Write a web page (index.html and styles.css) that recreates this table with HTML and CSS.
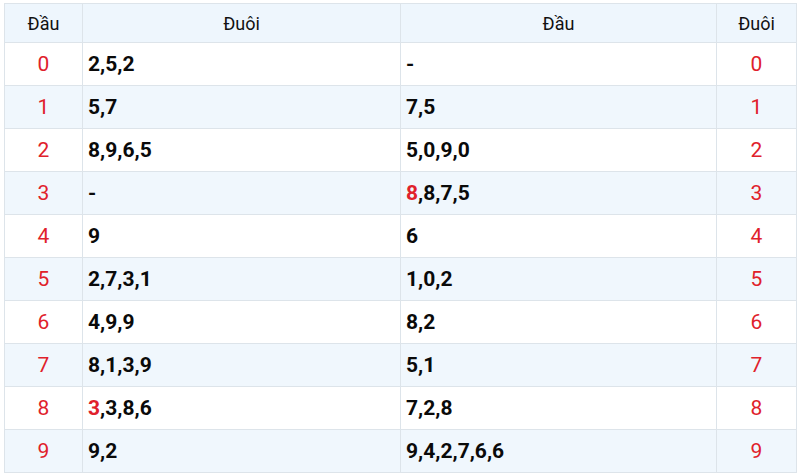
FILE: index.html
```html
<!DOCTYPE html>
<html lang="vi">
<head>
<meta charset="utf-8">
<link rel="stylesheet" href="styles.css">
</head>
<body>
<div class="wrap">
<table class="lt">
  <colgroup>
    <col class="c-num"><col class="c-val"><col class="c-val2"><col class="c-num2">
  </colgroup>
  <thead>
    <tr><th>Đầu</th><th>Đuôi</th><th>Đầu</th><th>Đuôi</th></tr>
  </thead>
  <tbody>
    <tr><td class="n">0</td><td class="v">2,5,2</td><td class="v">-</td><td class="n">0</td></tr>
    <tr><td class="n">1</td><td class="v">5,7</td><td class="v">7,5</td><td class="n">1</td></tr>
    <tr><td class="n">2</td><td class="v">8,9,6,5</td><td class="v">5,0,9,0</td><td class="n">2</td></tr>
    <tr><td class="n">3</td><td class="v">-</td><td class="v"><span class="hl">8</span>,8,7,5</td><td class="n">3</td></tr>
    <tr><td class="n">4</td><td class="v">9</td><td class="v">6</td><td class="n">4</td></tr>
    <tr><td class="n">5</td><td class="v">2,7,3,1</td><td class="v">1,0,2</td><td class="n">5</td></tr>
    <tr><td class="n">6</td><td class="v">4,9,9</td><td class="v">8,2</td><td class="n">6</td></tr>
    <tr><td class="n">7</td><td class="v">8,1,3,9</td><td class="v">5,1</td><td class="n">7</td></tr>
    <tr><td class="n">8</td><td class="v"><span class="hl">3</span>,3,8,6</td><td class="v">7,2,8</td><td class="n">8</td></tr>
    <tr><td class="n">9</td><td class="v">9,2</td><td class="v">9,4,2,7,6,6</td><td class="n">9</td></tr>
  </tbody>
</table>
</div>
</body>
</html>
```
FILE: styles.css
```css
html, body {
  margin: 0;
  padding: 0;
  background: #ffffff;
}
body {
  font-family: Roboto, "Liberation Sans", Arial, sans-serif;
  color: #111;
}
.wrap {
  padding: 3px 4px 0 4px;
}
.lt {
  width: 792px;
  border-collapse: collapse;
  table-layout: fixed;
  border: 1px solid #dde4ea;
}
.c-num { width: 78px; }
.c-val { width: 318px; }
.c-val2 { width: 316px; }
.c-num2 { width: 80px; }
.lt th {
  height: 38px;
  padding: 0;
  font-weight: 400;
  font-size: 18px;
  color: #111;
  background: #eef6fd;
  border: 1px solid #dde4ea;
  text-align: center;
}
.lt td {
  height: 42px;
  padding: 0 5px;
  border: 1px solid #dde4ea;
  font-size: 21px;
}
.lt tbody tr:nth-child(even) td {
  background: #f0f7fd;
}
.lt td.n {
  text-align: center;
  color: #e0212b;
}
.lt td.v {
  font-weight: 700;
  color: #0a0a0a;
}
.hl {
  color: #e0212b;
}
```
